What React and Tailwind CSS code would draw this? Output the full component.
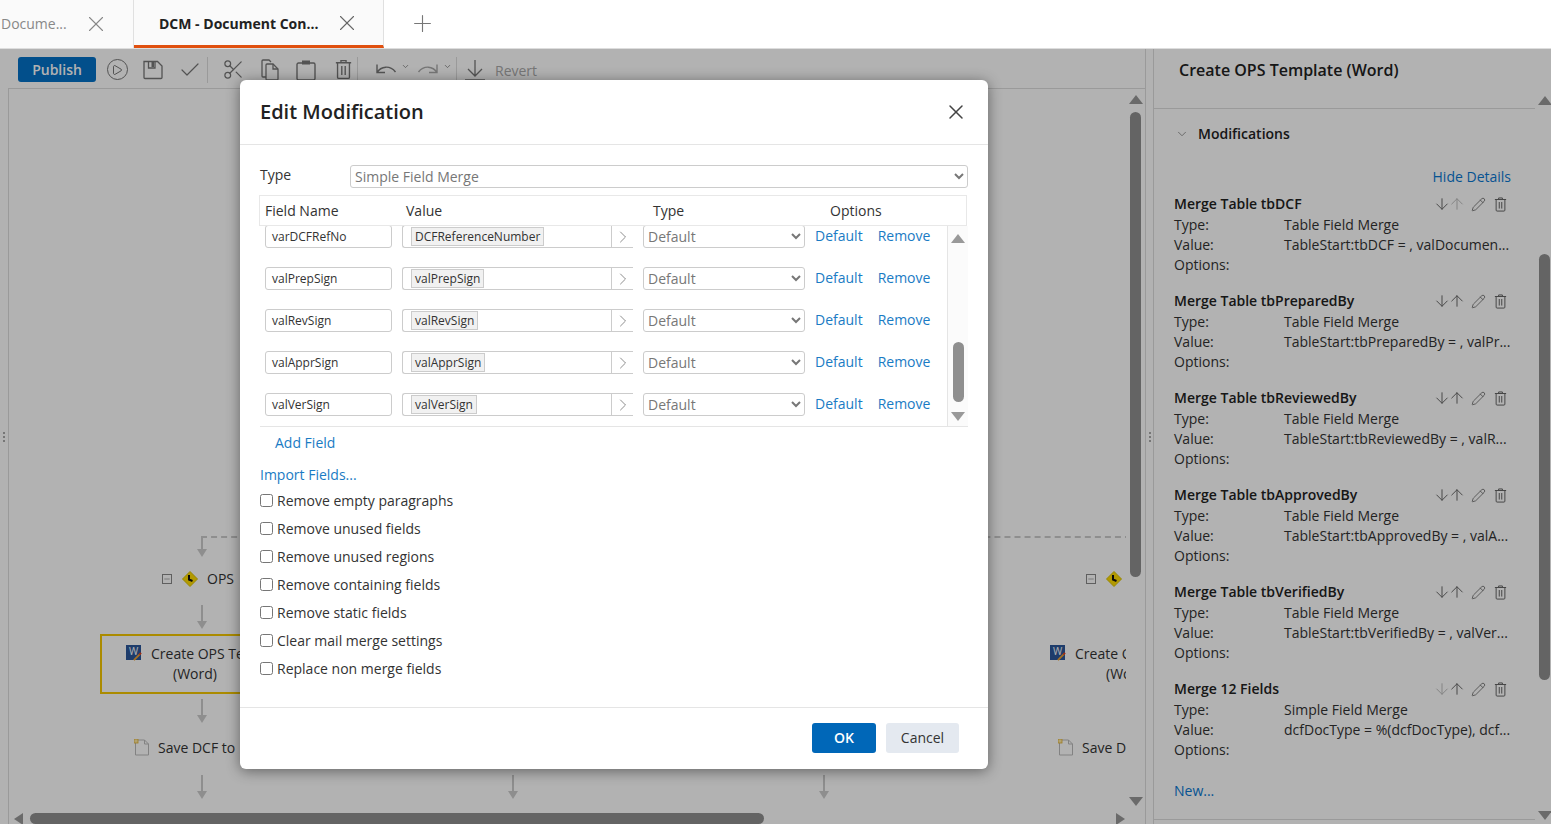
import { Play, Check, Scissors, ChevronDown, ChevronRight, X, Plus, ArrowDown, ArrowUp, Pencil, Minus } from "lucide-react";

const fields = [
  { name: "varDCFRefNo", value: "DCFReferenceNumber" },
  { name: "valPrepSign", value: "valPrepSign" },
  { name: "valRevSign", value: "valRevSign" },
  { name: "valApprSign", value: "valApprSign" },
  { name: "valVerSign", value: "valVerSign" },
];

const options = [
  "Remove empty paragraphs",
  "Remove unused fields",
  "Remove unused regions",
  "Remove containing fields",
  "Remove static fields",
  "Clear mail merge settings",
  "Replace non merge fields",
];

const mods = [
  { title: "Merge Table tbDCF", type: "Table Field Merge", value: "TableStart:tbDCF = , valDocumen...", upOff: true },
  { title: "Merge Table tbPreparedBy", type: "Table Field Merge", value: "TableStart:tbPreparedBy = , valPr..." },
  { title: "Merge Table tbReviewedBy", type: "Table Field Merge", value: "TableStart:tbReviewedBy = , valR..." },
  { title: "Merge Table tbApprovedBy", type: "Table Field Merge", value: "TableStart:tbApprovedBy = , valA..." },
  { title: "Merge Table tbVerifiedBy", type: "Table Field Merge", value: "TableStart:tbVerifiedBy = , valVer..." },
  { title: "Merge 12 Fields", type: "Simple Field Merge", value: "dcfDocType = %(dcfDocType), dcf...", downOff: true },
];

function TrashIcon({ className }) {
  return (
    <svg viewBox="0 0 20 24" fill="none" stroke="currentColor" strokeWidth="1.6" className={className}>
      <path d="M1 4h18M7 4V1.5h6V4M3 4v17a1.5 1.5 0 0 0 1.5 1.5h11A1.5 1.5 0 0 0 17 21V4M8 8v10.5M12 8v10.5" />
    </svg>
  );
}

function SaveIcon() {
  return (
    <svg viewBox="0 0 20 20" fill="none" stroke="currentColor" strokeWidth="1.3" className="h-[20px] w-[20px]">
      <path d="M1 1.5h13.5L19 6v11.5a1 1 0 0 1-1 1H2a1 1 0 0 1-1-1z" />
      <path d="M5.5 1.5v6.5h6.5V1.5" />
      <rect x="8.5" y="2" width="2.5" height="5" fill="currentColor" stroke="none" />
    </svg>
  );
}

function CopyIcon() {
  return (
    <svg viewBox="0 0 18 22" fill="none" stroke="currentColor" strokeWidth="1.3" className="h-[22px] w-[18px]">
      <path d="M5 18H2a1 1 0 0 1-1-1V2a1 1 0 0 1 1-1h6l2 2" />
      <path d="M5 6a1 1 0 0 1 1-1h6l5 5v10a1 1 0 0 1-1 1H6a1 1 0 0 1-1-1z" />
      <path d="M12 5v5h5" />
    </svg>
  );
}

function PasteIcon() {
  return (
    <svg viewBox="0 0 20 22" fill="none" stroke="currentColor" strokeWidth="1.4" className="h-[22px] w-[20px]">
      <path d="M6 4H2.5A1.5 1.5 0 0 0 1 5.5v14A1.5 1.5 0 0 0 2.5 21h15a1.5 1.5 0 0 0 1.5-1.5v-14A1.5 1.5 0 0 0 17.5 4H14" />
      <path d="M6 5.5h8V1.5H6z" fill="currentColor" stroke="none" />
    </svg>
  );
}

function UndoIcon({ flip, className }) {
  return (
    <svg viewBox="0 0 22 14" fill="none" stroke="currentColor" strokeWidth="1.4" className={`h-[14px] w-[22px] ${flip ? "-scale-x-100" : ""} ${className || ""}`}>
      <path d="M2 1.5v8h8M2 9.5C6 3 15 2 20.5 9" />
    </svg>
  );
}

function Diamond() {
  return (
    <svg viewBox="0 0 16 16" className="h-[16px] w-[16px]">
      <path d="M8 0.5 15.5 8 8 15.5 0.5 8z" fill="#ffdc00" stroke="#d8c000" />
      <path d="M7 4v4.5l3.5 1.5" fill="none" stroke="#111" strokeWidth="2" />
    </svg>
  );
}

function WordIcon() {
  return (
    <span className="relative block h-[15px] w-[15px] bg-[#2b579a] text-center text-[10px] leading-[13px] text-white">
      W
      <svg viewBox="0 0 10 10" className="absolute -bottom-[1px] -right-[1px] h-[9px] w-[9px]">
        <path d="M1 9 8 2" stroke="#f0a030" strokeWidth="2" />
        <path d="M7 3 9 1" stroke="#e04020" strokeWidth="2" />
      </svg>
    </span>
  );
}

function DocIcon() {
  return (
    <svg viewBox="0 0 16 17" className="h-[17px] w-[16px]">
      <path d="M1.5 1h9l4 4v11h-13z" fill="#fff" stroke="#bbb" />
      <path d="M10.5 1v4h4" fill="none" stroke="#bbb" />
      <rect x="0" y="0" width="4" height="4" fill="#ffe9a0" stroke="#e0b030" strokeWidth="0.8" />
    </svg>
  );
}

function FlowArrow({ className }) {
  return (
    <div className={`absolute flex w-[12px] flex-col items-center ${className}`}>
      <div className="w-[2px] flex-1 bg-[#ccc]" />
      <div className="h-0 w-0 border-x-[5px] border-t-[8px] border-x-transparent border-t-[#ccc]" />
    </div>
  );
}

function Triangle({ dir, className }) {
  const shape = {
    up: "border-x-[7px] border-b-[9px] border-x-transparent border-b-[#999]",
    down: "border-x-[7px] border-t-[9px] border-x-transparent border-t-[#999]",
    left: "border-y-[6px] border-r-[9px] border-y-transparent border-r-[#999]",
    right: "border-y-[6px] border-l-[9px] border-y-transparent border-l-[#999]",
  };
  return <div className={`h-0 w-0 ${shape[dir]} ${className || ""}`} />;
}

function Handle() {
  return (
    <div className="flex flex-col gap-[2px]">
      <span className="h-[2px] w-[2px] bg-[#aaa]" />
      <span className="h-[2px] w-[2px] bg-[#aaa]" />
      <span className="h-[2px] w-[2px] bg-[#aaa]" />
    </div>
  );
}

function Toolbar() {
  return (
    <div className="flex h-[40px] items-center border-b border-[#ddd] pl-[10px] pt-[2px] text-[#777]">
      <button className="h-[25px] w-[78px] rounded-[3px] bg-[#0372c8] text-[14px] font-semibold text-white">Publish</button>
      <div className="ml-[10px] flex w-[22px] justify-center">
        <span className="flex h-[21px] w-[21px] items-center justify-center rounded-full border-[1.5px] border-[#777]">
          <Play size={12} fill="none" strokeWidth={2} />
        </span>
      </div>
      <div className="ml-[15px] flex w-[20px] justify-center"><SaveIcon /></div>
      <Check size={24} strokeWidth={1.2} className="ml-[15px]" />
      <div className="ml-[5px] h-[26px] w-px bg-[#ddd]" />
      <Scissors size={23} strokeWidth={1.3} className="ml-[14px]" />
      <div className="ml-[16px]"><CopyIcon /></div>
      <div className="ml-[17px]"><PasteIcon /></div>
      <TrashIcon className="ml-[19px] h-[21px] w-[17px]" />
      <div className="ml-[5px] h-[26px] w-px bg-[#ddd]" />
      <UndoIcon className="ml-[17px]" />
      <ChevronDown size={9} className="mb-[6px] ml-[4px]" />
      <UndoIcon flip className="ml-[7px] text-[#aaa]" />
      <ChevronDown size={9} className="mb-[6px] ml-[4px]" />
      <div className="ml-[4px] h-[26px] w-px bg-[#ddd]" />
      <svg viewBox="0 0 20 22" fill="none" stroke="currentColor" strokeWidth="1.3" className="ml-[8px] h-[22px] w-[20px]">
        <path d="M10 1v16M3 10l7 7 7-7M0 21h20" />
      </svg>
      <span className="ml-[10px] mt-[2px] text-[14px] text-[#aaa]">Revert</span>
    </div>
  );
}

function Canvas() {
  return (
    <div className="relative flex-1 overflow-hidden border-l border-[#ddd]">
      <div className="absolute left-[192px] top-[447px] h-[12px] w-[930px] border-l-2 border-t-2 border-dashed border-[#ccc]" />
      <FlowArrow className="left-[187px] top-[450px] h-[18px]" />
      {[0, 924].map((dx) => (
        <div key={dx} className="absolute left-0 top-0" style={{ transform: `translateX(${dx}px)` }}>
          <span className="absolute left-[153px] top-[485px] flex h-[10px] w-[10px] items-center justify-center border border-[#888] text-[#888]">
            <Minus size={8} />
          </span>
          <span className="absolute left-[173px] top-[482px]"><Diamond /></span>
          {dx === 0 && <span className="absolute left-[198px] top-[479px] text-[14px] text-[#333]">OPS</span>}
          <span className="absolute left-[117px] top-[556px]"><WordIcon /></span>
          <span className="absolute left-[125px] top-[650px]"><DocIcon /></span>
        </div>
      ))}
      <FlowArrow className="left-[187px] top-[516px] h-[24px]" />
      <div className="absolute left-[91px] top-[545px] h-[60px] w-[200px] border-2 border-[#f5c800]" />
      <span className="absolute left-[142px] top-[554px] whitespace-nowrap text-[14px] text-[#333]">Create OPS Template</span>
      <span className="absolute left-[164px] top-[574px] text-[14px] text-[#333]">(Word)</span>
      <span className="absolute left-[149px] top-[648px] whitespace-nowrap text-[14px] text-[#333]">Save DCF to</span>
      <FlowArrow className="left-[187px] top-[610px] h-[24px]" />
      <FlowArrow className="left-[187px] top-[686px] h-[24px]" />
      <FlowArrow className="left-[498px] top-[686px] h-[24px]" />
      <FlowArrow className="left-[809px] top-[686px] h-[24px]" />
      <div className="absolute left-[1066px] top-[554px] w-[60px] overflow-hidden whitespace-nowrap text-[14px] text-[#333]">Create OPS</div>
      <div className="absolute left-[1097px] top-[574px] w-[20px] overflow-hidden text-[14px] text-[#333]">(Word)</div>
      <div className="absolute left-[1073px] top-[648px] w-[44px] overflow-hidden whitespace-nowrap text-[14px] text-[#333]">Save DCF</div>
      <div className="absolute right-0 top-0 h-full w-[19px] bg-white" />
      <div className="absolute right-[4px] top-[6px] flex h-[711px] w-[11px] flex-col items-center">
        <Triangle dir="up" />
        <div className="mt-[8px] h-[465px] w-[11px] shrink-0 rounded-[6px] bg-[#909090]" />
        <div className="flex-1" />
        <Triangle dir="down" />
      </div>
      <div className="absolute bottom-0 left-0 right-[20px] flex h-[11px] items-center pl-[5px]">
        <Triangle dir="left" />
        <div className="ml-[7px] h-[11px] w-[734px] rounded-[6px] bg-[#909090]" />
        <div className="flex-1" />
        <Triangle dir="right" />
      </div>
    </div>
  );
}

function ModCard({ mod }) {
  return (
    <div className="mb-[16px] text-[14px] leading-[20px] text-[#333]">
      <div className="flex h-[20px] items-center justify-between pr-[4px]">
        <span className="font-semibold text-[#222]">{mod.title}</span>
        <div className="flex items-center text-[#666]">
          <ArrowDown size={18} strokeWidth={1.3} className={mod.downOff ? "text-[#bbb]" : ""} />
          <ArrowUp size={18} strokeWidth={1.3} className={mod.upOff ? "-ml-[3px] text-[#bbb]" : "-ml-[3px]"} />
          <Pencil size={15} strokeWidth={1.3} className="ml-[5px]" />
          <TrashIcon className="ml-[8px] h-[15px] w-[13px]" />
        </div>
      </div>
      <div className="mt-[1px] flex"><span className="w-[110px]">Type:</span><span className="whitespace-nowrap">{mod.type}</span></div>
      <div className="flex"><span className="w-[110px]">Value:</span><span className="whitespace-nowrap">{mod.value}</span></div>
      <div>Options:</div>
    </div>
  );
}

function SidePanel() {
  return (
    <div className="flex w-[398px] flex-col border-l border-[#ddd]">
      <div className="flex h-[42px] items-center pl-[25px] text-[16px] font-semibold text-[#222]">Create OPS Template (Word)</div>
      <div className="relative flex-1">
        <div className="mr-[16px] mt-[17px] h-px bg-[#ddd]" />
        <div className="mt-[14px] flex items-center pl-[21px] text-[14px] font-semibold text-[#222]">
          <ChevronDown size={14} strokeWidth={1.3} className="text-[#777]" />
          <span className="ml-[9px]">Modifications</span>
        </div>
        <div className="mt-[23px] pr-[40px] text-right text-[14px] leading-[20px] text-[#0a78d2]">Hide Details</div>
        <div className="mt-[7px] pl-[20px] pr-[40px]">
          {mods.map((m) => <ModCard key={m.title} mod={m} />)}
          <div className="mt-[21px] text-[14px] leading-[20px] text-[#0a78d2]">New...</div>
        </div>
        <div className="absolute bottom-[4px] left-0 right-[16px] h-px bg-[#ddd]" />
        <div className="absolute bottom-[4px] right-[1px] top-[5px] flex w-[11px] flex-col items-center">
          <Triangle dir="up" />
          <div className="mt-[149px] h-[426px] w-[11px] shrink-0 rounded-[6px] bg-[#909090]" />
          <div className="flex-1" />
          <Triangle dir="down" />
        </div>
      </div>
    </div>
  );
}

function FieldRow({ field }) {
  return (
    <div className="flex h-[42px] items-start pl-[5px] text-[12px] text-[#333]">
      <div className="flex h-[23px] w-[127px] items-center rounded-[3px] border border-[#ccc] pl-[6px]">{field.name}</div>
      <div className="ml-[10px] flex h-[23px] w-[231px] items-center rounded-l-[3px] border-y border-l border-[#ccc]">
        <div className="flex-1 pl-[8px]">
          <span className="block w-fit border border-[#ccc] bg-[#f1f1f1] px-[3px] leading-[17px]">{field.value}</span>
        </div>
        <div className="flex h-full w-[22px] items-center justify-center border-l border-[#ccc] text-[#777]">
          <ChevronRight size={20} strokeWidth={1} />
        </div>
      </div>
      <select defaultValue="Default" className="ml-[10px] h-[23px] w-[162px] rounded-[3px] border border-[#ccc] bg-white text-[14px] text-[#777]">
        <option>Default</option>
      </select>
      <a className="ml-[10px] mt-px text-[14px] leading-[20px] text-[#1a7bc4]">Default</a>
      <a className="ml-[15px] mt-px text-[14px] leading-[20px] text-[#1a7bc4]">Remove</a>
    </div>
  );
}

function EditModal() {
  return (
    <div className="absolute left-[240px] top-[80px] flex h-[689px] w-[748px] flex-col rounded-[6px] bg-white shadow-[0_2px_14px_rgba(0,0,0,0.45)]">
      <div className="flex h-[65px] items-center justify-between border-b border-[#e5e5e5] pl-[20px] pr-[20px]">
        <h2 className="text-[20px] font-semibold text-[#222]">Edit Modification</h2>
        <X size={24} strokeWidth={1.5} className="text-[#444]" />
      </div>
      <div className="flex-1 pl-[20px] pr-[20px] pt-[20px]">
        <div className="flex h-[23px] items-center text-[14px] text-[#333]">
          <label className="mb-[5px] w-[90px]">Type</label>
          <select defaultValue="Simple Field Merge" className="h-[23px] flex-1 rounded-[3px] border border-[#ccc] bg-white text-[14px] text-[#777]">
            <option>Simple Field Merge</option>
          </select>
        </div>
        <div className="-ml-px mt-[7px] flex h-[31px] w-[708px] items-center border border-[#e8e8e8] pb-[1px] text-[14px] text-[#333]">
          <span className="ml-[5px] w-[141px]">Field Name</span>
          <span className="w-[247px]">Value</span>
          <span className="w-[177px]">Type</span>
          <span>Options</span>
        </div>
        <div className="flex h-[201px] overflow-hidden border-b border-[#e5e5e5]">
          <div className="-mt-px w-[687px] shrink-0">
            {fields.map((f) => <FieldRow key={f.name} field={f} />)}
          </div>
          <div className="flex w-[21px] flex-col items-center border-l border-[#e5e5e5] bg-[#fbfbfb] pb-[5px] pt-[8px]">
            <Triangle dir="up" />
            <div className="mt-[99px] h-[60px] w-[11px] shrink-0 rounded-[6px] bg-[#8f8f8f]" />
            <div className="flex-1" />
            <Triangle dir="down" />
          </div>
        </div>
        <div className="ml-[15px] mt-[6px] text-[14px] leading-[20px] text-[#1a7bc4]">Add Field</div>
        <div className="mt-[12px] text-[14px] leading-[20px] text-[#1a7bc4]">Import Fields...</div>
        <div className="mt-[5px] flex flex-col gap-[8px]">
          {options.map((o) => (
            <label key={o} className="flex h-[20px] items-center text-[14px] text-[#333]">
              <input type="checkbox" className="h-[13px] w-[13px]" />
              <span className="ml-[4px]">{o}</span>
            </label>
          ))}
        </div>
      </div>
      <div className="flex h-[62px] items-start justify-end border-t border-[#e5e5e5] pr-[29px] pt-[15px]">
        <button className="h-[30px] w-[64px] rounded-[3px] bg-[#0067b8] pb-[2px] text-[14px] font-semibold text-white">OK</button>
        <button className="ml-[10px] h-[30px] w-[73px] rounded-[3px] bg-[#e4e9f0] pb-[2px] text-[14px] text-[#333]">Cancel</button>
      </div>
    </div>
  );
}

export default function App() {
  return (
    <div className="relative flex h-[824px] w-full flex-col overflow-hidden bg-white font-['Open_Sans',sans-serif]">
      <div className="flex h-[49px] shrink-0 border-b border-[#ddd]">
        <div className="flex h-[48px] w-[134px] items-center justify-between border-r border-[#e0e0e0] bg-[#fafafa] pb-[1px] pl-[1px] pr-[24px] text-[14px] text-[#888]">
          <span>Docume...</span>
          <X size={26} strokeWidth={1} className="text-[#888]" />
        </div>
        <div className="flex h-[48px] w-[250px] items-center justify-between border-b-[3px] border-r border-b-[#e0500f] border-r-[#e0e0e0] bg-[#fafafa] pl-[25px] pr-[23px] text-[14px] font-bold text-[#222]">
          <span className="mt-px">DCM - Document Con...</span>
          <X size={26} strokeWidth={1} className="text-[#666]" />
        </div>
        <div className="flex h-[47px] w-[76px] items-center justify-center">
          <Plus size={27} strokeWidth={1} className="text-[#777]" />
        </div>
      </div>
      <div className="flex flex-1">
        <div className="flex w-[8px] items-center justify-center"><Handle /></div>
        <div className="flex flex-1 flex-col">
          <Toolbar />
          <Canvas />
        </div>
        <div className="flex w-[8px] items-center justify-center border-l border-[#ddd]"><Handle /></div>
        <SidePanel />
      </div>
      <div className="absolute inset-x-0 bottom-0 top-[49px] bg-black/30" />
      <EditModal />
    </div>
  );
}
